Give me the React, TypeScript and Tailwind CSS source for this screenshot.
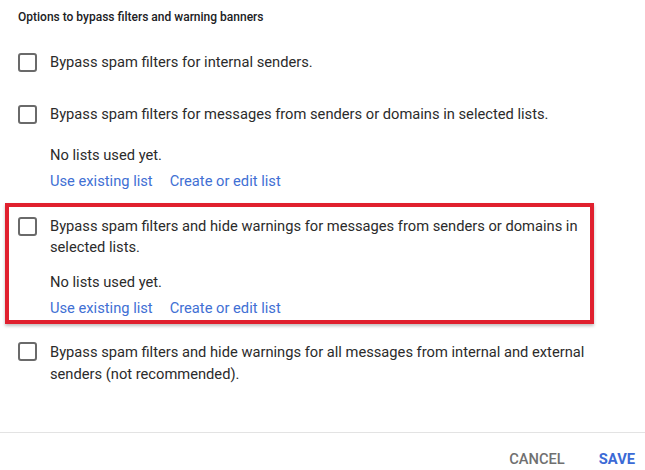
import React from 'react';

function Checkbox() {
  return (
    <span className="mt-[1px] block h-[19px] w-[19px] shrink-0 rounded-[3px] border-2 border-[#6a6a6a] bg-white" />
  );
}

function ListLinks({ top }: { top: string }) {
  return (
    <div className="text-[14.7px] leading-5">
      <div className={`${top} text-[#2b2b2b]`}>No lists used yet.</div>
      <div className="mt-[6px] flex gap-[17px] text-[#4170d4]">
        <span>Use existing list</span>
        <span>Create or edit list</span>
      </div>
    </div>
  );
}

export default function App() {
  return (
    <div className="h-[470px] w-[645px] bg-white font-['Roboto',sans-serif] text-[#2b2b2b]">
      <div className="px-[18px] pt-[7px]">
        <h3 className="text-[12px] font-medium leading-5 text-[#202124]">
          Options to bypass filters and warning banners
        </h3>

        {/* Option 1 */}
        <div className="mt-[25px] flex items-start gap-[13px] text-[14.7px] leading-[21px]">
          <Checkbox />
          <span>Bypass spam filters for internal senders.</span>
        </div>

        {/* Option 2 */}
        <div className="mt-[31px] flex items-start gap-[13px] text-[14.7px] leading-[21px]">
          <Checkbox />
          <div>
            <span>Bypass spam filters for messages from senders or domains in selected lists.</span>
            <ListLinks top="mt-[20px]" />
          </div>
        </div>
      </div>

      {/* Option 3, highlighted */}
      <div className="ml-[5px] mt-[12px] w-[589px] border-4 border-[#e0202e] pb-[2px] pl-[9px] pr-[4px] pt-[9px] shadow-[0_2px_3px_rgba(0,0,0,0.25)]">
        <div className="flex items-start gap-[13px] text-[14.7px] leading-[21px]">
          <Checkbox />
          <div>
            <span>Bypass spam filters and hide warnings for messages from senders or domains in selected lists.</span>
            <ListLinks top="mt-[14px]" />
          </div>
        </div>
      </div>

      {/* Option 4 */}
      <div className="px-[18px]">
        <div className="mt-[17px] flex w-[575px] items-start gap-[13px] text-[14.7px] leading-[22px]">
          <Checkbox />
          <span>
            Bypass spam filters and hide warnings for all messages from internal and external senders (not recommended).
          </span>
        </div>
      </div>

      <div className="mt-[47px] border-t border-[#e3e3e3]" />

      <div className="flex justify-end gap-[34px] pr-[10px] pt-[16px] text-[14.7px] font-medium leading-5">
        <span className="text-[#707070]">CANCEL</span>
        <span className="font-bold text-[#3b6ad6]">SAVE</span>
      </div>
    </div>
  );
}
